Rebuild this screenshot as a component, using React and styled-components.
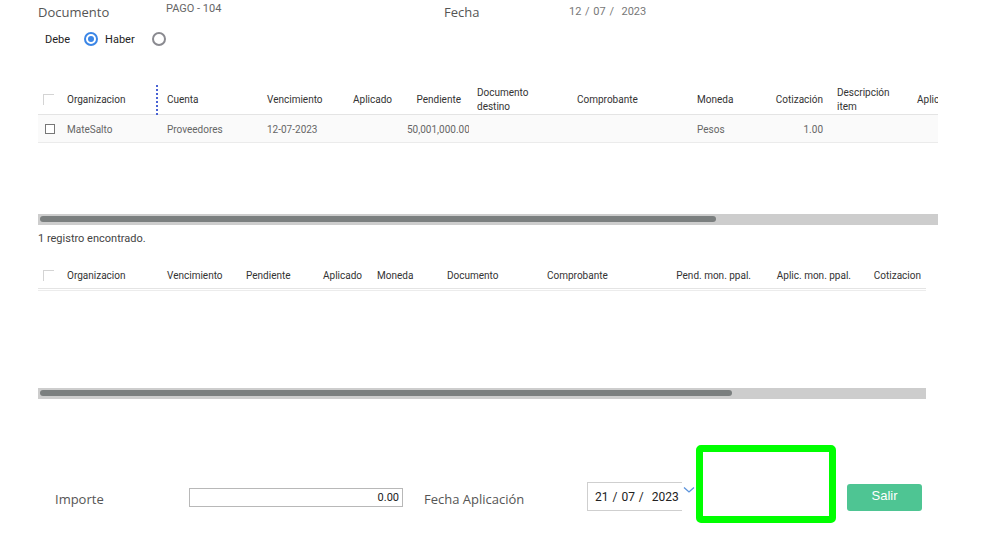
import React from "react";
import styled, { createGlobalStyle } from "styled-components";

const Global = createGlobalStyle`
  html, body { margin: 0; padding: 0; background: #fff; }
  body { font-family: Roboto, "Liberation Sans", Arial, sans-serif; }
  * { box-sizing: border-box; }
`;

const Page = styled.div`
  width: 984px;
  height: 533px;
  padding-left: 38px;
  display: flex;
  flex-direction: column;
  overflow: hidden;
`;

const TopRow = styled.div`
  display: flex;
  align-items: center;
  height: 24px;
`;

const FieldLabel = styled.div`
  font-family: "Open Sans", "Noto Sans", sans-serif;
  font-size: 13px;
  color: #555;
  width: ${(p) => p.$w}px;
  flex: none;
  white-space: nowrap;
`;

const DocValue = styled.div`
  font-family: Roboto, "Liberation Sans", sans-serif;
  font-size: 11px;
  color: #666;
  width: ${(p) => p.$w}px;
  align-self: flex-start;
  margin-top: 2px;
  flex: none;
`;

const DateValue = styled.div`
  font-family: Roboto, "Liberation Sans", sans-serif;
  font-size: 11px;
  color: #777;
  margin-top: -1px;
  word-spacing: 1px;
`;

const RadioRow = styled.div`
  display: flex;
  align-items: center;
  height: 18px;
  margin-top: 6px;
  padding-left: 7px;
`;

const RadioText = styled.span`
  font-size: 11px;
  color: #222;
  margin-right: ${(p) => p.$mr}px;
`;

const Radio = styled.span`
  width: 14px;
  height: 14px;
  border-radius: 50%;
  border: 2px solid ${(p) => (p.$on ? "#3b86e6" : "#8a8a90")};
  display: flex;
  align-items: center;
  justify-content: center;
  margin-right: ${(p) => p.$mr}px;
  flex: none;
  &::after {
    content: "";
    display: ${(p) => (p.$on ? "block" : "none")};
    width: 6px;
    height: 6px;
    border-radius: 50%;
    background: #3b86e6;
  }
`;

const Table = styled.div`
  width: ${(p) => p.$w}px;
  margin-top: ${(p) => p.$mt}px;
  display: flex;
  flex-direction: column;
  overflow: hidden;
`;

const HeaderRow = styled.div`
  display: flex;
  height: ${(p) => p.$h}px;
  align-items: center;
  padding-top: ${(p) => p.$pt || 0}px;
  border-bottom: 1px solid #e4e4e4;
  position: relative;
  flex: none;
`;

const Body = styled.div`
  height: ${(p) => p.$h}px;
  border-top: ${(p) => (p.$double ? "1px solid #ececec" : "none")};
  margin-top: ${(p) => (p.$double ? "1px" : "0")};
  flex: none;
`;

const DataRow = styled.div`
  display: flex;
  height: 28px;
  align-items: center;
  padding-top: 3px;
  background: #fafafa;
  border-bottom: 1px solid #ebebeb;
`;

const Cell = styled.div`
  width: ${(p) => p.$w}px;
  flex: none;
  padding: 0 ${(p) => p.$pr ?? 10}px 0 ${(p) => p.$pl ?? 10}px;
  text-align: ${(p) => (p.$right ? "right" : "left")};
  font-size: 10px;
  line-height: 14px;
  color: ${(p) => (p.$head ? "#333" : "#666")};
  white-space: ${(p) => (p.$wrap ? "normal" : "nowrap")};
  overflow: hidden;
`;

const CheckCell = styled.div`
  width: 19px;
  flex: none;
  padding-left: ${(p) => (p.$row ? 7 : 5)}px;
  display: flex;
  align-items: center;
`;

const HeadCheck = styled.span`
  width: 11px;
  height: 11px;
  border-top: 1px solid #d4d4d4;
  border-left: 1px solid #d4d4d4;
  margin-top: -1px;
`;

const RowCheck = styled.span`
  width: 10px;
  height: 10px;
  border: 1px solid #777;
  background: #fff;
  margin-top: -2px;
`;

const ResizeHandle = styled.div`
  position: absolute;
  left: 118px;
  top: 0;
  height: 30px;
  border-left: 2px dotted #4a63d4;
`;

const Track = styled.div`
  width: ${(p) => p.$w}px;
  height: 11px;
  background: #cdcdcd;
  padding: 2px 0 0 2px;
  flex: none;
`;

const Thumb = styled.div`
  height: 6px;
  border-radius: 3px;
  background: #7b7f7f;
`;

const Count = styled.div`
  margin-top: 7px;
  font-size: 11px;
  line-height: 14px;
  color: #444;
`;

const BottomRow = styled.div`
  display: flex;
  align-items: center;
  margin-top: 76px;
  padding-left: 17px;
`;

const AmountInput = styled.div`
  width: 214px;
  height: 19px;
  border: 1px solid #b8b8b8;
  font-size: 11px;
  color: #222;
  text-align: right;
  padding-right: 3px;
  line-height: 17px;
  margin-right: 21px;
  margin-bottom: 4px;
  flex: none;
`;

const DateBox = styled.div`
  width: 95px;
  height: 29px;
  border: 1px solid #cfcfcf;
  border-right: none;
  display: flex;
  align-items: center;
  padding-left: 7px;
  font-size: 12px;
  color: #222;
  word-spacing: 1px;
  margin-bottom: 5px;
  flex: none;
  white-space: nowrap;
`;

const Chevron = styled.svg`
  width: 12px;
  height: 8px;
  margin-top: -18px;
  margin-left: 1px;
  margin-right: 1px;
  flex: none;
`;

const Highlight = styled.div`
  width: 140px;
  height: 78px;
  border: 7px solid #00ff00;
  border-radius: 5px;
  margin-top: -30px;
  flex: none;
`;

const SalirButton = styled.button`
  width: 75px;
  height: 27px;
  margin-left: 11px;
  margin-bottom: 3px;
  border: none;
  border-radius: 3px;
  background: #4ec593;
  color: #fff;
  font-family: "Liberation Sans", Arial, sans-serif;
  font-size: 13px;
  padding: 0 0 5px;
  flex: none;
`;

const cols1 = [
  { t: "Organizacion", w: 100, v: "MateSalto" },
  { t: "Cuenta", w: 100, v: "Proveedores" },
  { t: "Vencimiento", w: 86, v: "12-07-2023" },
  { t: "Aplicado", w: 54, v: "" },
  { t: "Pendiente", w: 72, v: "50,001,000.00", right: true, pr: 8 },
  { t: "Documento destino", w: 98, v: "", wrap: true, pl: 8 },
  { t: "Comprobante", w: 120, v: "" },
  { t: "Moneda", w: 78, v: "Pesos" },
  { t: "Cotización", w: 62, v: "1.00", right: true, pr: 4 },
  { t: "Descripción item", w: 80, v: "", wrap: true },
  { t: "Aplic", w: 60, v: "" },
];

const cols2 = [
  { t: "Organizacion", w: 100 },
  { t: "Vencimiento", w: 79 },
  { t: "Pendiente", w: 77 },
  { t: "Aplicado", w: 54 },
  { t: "Moneda", w: 70 },
  { t: "Documento", w: 100 },
  { t: "Comprobante", w: 120 },
  { t: "Pend. mon. ppal.", w: 104, right: true },
  { t: "Aplic. mon. ppal.", w: 100, right: true },
  { t: "Cotizacion", w: 65, right: true, pr: 5 },
];

export default function App() {
  return (
    <>
      <Global />
      <Page>
        <TopRow>
          <FieldLabel $w={128}>Documento</FieldLabel>
          <DocValue $w={278}>PAGO - 104</DocValue>
          <FieldLabel $w={125}>Fecha</FieldLabel>
          <DateValue>12 / 07 / &nbsp;2023</DateValue>
        </TopRow>

        <RadioRow>
          <RadioText $mr={14}>Debe</RadioText>
          <Radio $on $mr={7} />
          <RadioText $mr={17}>Haber</RadioText>
          <Radio $mr={0} />
        </RadioRow>

        <Table $w={900} $mt={37}>
          <HeaderRow $h={30}>
            <CheckCell>
              <HeadCheck />
            </CheckCell>
            {cols1.map((c) => (
              <Cell key={c.t} $w={c.w} $head $right={c.right} $pr={c.pr} $pl={c.pl} $wrap={c.wrap}>
                {c.t}
              </Cell>
            ))}
            <ResizeHandle />
          </HeaderRow>
          <Body $h={99}>
            <DataRow>
              <CheckCell $row>
                <RowCheck />
              </CheckCell>
              {cols1.map((c) => (
                <Cell key={c.t} $w={c.w} $right={c.right} $pr={c.pr} $pl={c.pl}>
                  {c.v}
                </Cell>
              ))}
            </DataRow>
          </Body>
          <Track $w={900}>
            <Thumb style={{ width: 676 }} />
          </Track>
        </Table>

        <Count>1 registro encontrado.</Count>

        <Table $w={888} $mt={16}>
          <HeaderRow $h={27} $pt={2}>
            <CheckCell>
              <HeadCheck />
            </CheckCell>
            {cols2.map((c) => (
              <Cell key={c.t} $w={c.w} $head $right={c.right} $pr={c.pr}>
                {c.t}
              </Cell>
            ))}
          </HeaderRow>
          <Body $h={98} $double />
          <Track $w={888}>
            <Thumb style={{ width: 692 }} />
          </Track>
        </Table>

        <BottomRow>
          <FieldLabel $w={134}>Importe</FieldLabel>
          <AmountInput>0.00</AmountInput>
          <FieldLabel $w={163}>Fecha Aplicación</FieldLabel>
          <DateBox>21 / 07 / &nbsp;2023</DateBox>
          <Chevron viewBox="0 0 12 8">
            <polyline points="1,1.5 6,6 11,1.5" fill="none" stroke="#5b93dc" strokeWidth="1.3" />
          </Chevron>
          <Highlight />
          <SalirButton>Salir</SalirButton>
        </BottomRow>
      </Page>
    </>
  );
}
